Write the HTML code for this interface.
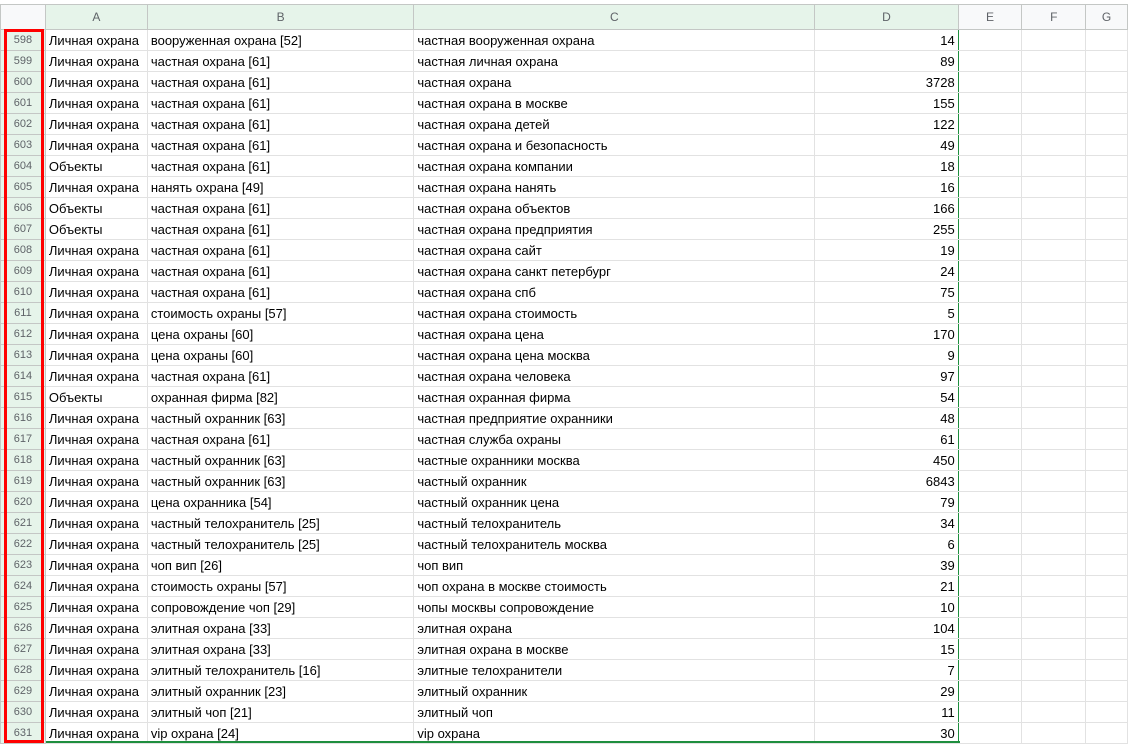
<!DOCTYPE html>
<html><head><meta charset="utf-8"><style>
body{margin:0;width:1128px;height:743px;overflow:hidden;background:#fff;font-family:"Liberation Sans",Arial,sans-serif;position:relative}
table{position:absolute;left:0;top:4px;border-collapse:collapse;table-layout:fixed}
td{border:1px solid #e2e2e2;height:18px;padding:2px 3px 0 3px;font-size:13px;color:#000;white-space:nowrap;overflow:hidden;line-height:18px}
tr.h td{height:24px;padding:0;line-height:20px;background:#f8f9fa;color:#5f6368;text-align:center;font-size:12px;border-color:#c4c7c5}
tr.h td.s{background:#e6f4ea}
td.rn{background:#e6f4ea;color:#5f6368;font-size:11px;text-align:center;border-color:#c4c7c5;padding:0;height:20px;line-height:20px}
td.n{text-align:right}
td.g{border-right:1px solid #1e8e3e}
#red{position:absolute;left:4px;top:29px;width:34px;height:708px;border:3px solid #f00}
#gb{position:absolute;left:46px;top:741px;width:914px;height:2px;background:#1e8e3e}
#topline{position:absolute;left:0;top:0;width:1128px;height:4px;background:#fff}
</style></head><body>
<table>
<colgroup><col style="width:45px"><col style="width:102px"><col style="width:267px"><col style="width:402px"><col style="width:144px"><col style="width:64px"><col style="width:64px"><col style="width:42px"></colgroup>
<tr class="h"><td style="background:#f8f9fa"></td><td class="s">A</td><td class="s">B</td><td class="s">C</td><td class="s">D</td><td>E</td><td>F</td><td>G</td></tr>
<tr><td class="rn">598</td><td>Личная охрана</td><td>вооруженная охрана [52]</td><td>частная вооруженная охрана</td><td class="n g">14</td><td></td><td></td><td></td></tr>
<tr><td class="rn">599</td><td>Личная охрана</td><td>частная охрана [61]</td><td>частная личная охрана</td><td class="n g">89</td><td></td><td></td><td></td></tr>
<tr><td class="rn">600</td><td>Личная охрана</td><td>частная охрана [61]</td><td>частная охрана</td><td class="n g">3728</td><td></td><td></td><td></td></tr>
<tr><td class="rn">601</td><td>Личная охрана</td><td>частная охрана [61]</td><td>частная охрана в москве</td><td class="n g">155</td><td></td><td></td><td></td></tr>
<tr><td class="rn">602</td><td>Личная охрана</td><td>частная охрана [61]</td><td>частная охрана детей</td><td class="n g">122</td><td></td><td></td><td></td></tr>
<tr><td class="rn">603</td><td>Личная охрана</td><td>частная охрана [61]</td><td>частная охрана и безопасность</td><td class="n g">49</td><td></td><td></td><td></td></tr>
<tr><td class="rn">604</td><td>Объекты</td><td>частная охрана [61]</td><td>частная охрана компании</td><td class="n g">18</td><td></td><td></td><td></td></tr>
<tr><td class="rn">605</td><td>Личная охрана</td><td>нанять охрана [49]</td><td>частная охрана нанять</td><td class="n g">16</td><td></td><td></td><td></td></tr>
<tr><td class="rn">606</td><td>Объекты</td><td>частная охрана [61]</td><td>частная охрана объектов</td><td class="n g">166</td><td></td><td></td><td></td></tr>
<tr><td class="rn">607</td><td>Объекты</td><td>частная охрана [61]</td><td>частная охрана предприятия</td><td class="n g">255</td><td></td><td></td><td></td></tr>
<tr><td class="rn">608</td><td>Личная охрана</td><td>частная охрана [61]</td><td>частная охрана сайт</td><td class="n g">19</td><td></td><td></td><td></td></tr>
<tr><td class="rn">609</td><td>Личная охрана</td><td>частная охрана [61]</td><td>частная охрана санкт петербург</td><td class="n g">24</td><td></td><td></td><td></td></tr>
<tr><td class="rn">610</td><td>Личная охрана</td><td>частная охрана [61]</td><td>частная охрана спб</td><td class="n g">75</td><td></td><td></td><td></td></tr>
<tr><td class="rn">611</td><td>Личная охрана</td><td>стоимость охраны [57]</td><td>частная охрана стоимость</td><td class="n g">5</td><td></td><td></td><td></td></tr>
<tr><td class="rn">612</td><td>Личная охрана</td><td>цена охраны [60]</td><td>частная охрана цена</td><td class="n g">170</td><td></td><td></td><td></td></tr>
<tr><td class="rn">613</td><td>Личная охрана</td><td>цена охраны [60]</td><td>частная охрана цена москва</td><td class="n g">9</td><td></td><td></td><td></td></tr>
<tr><td class="rn">614</td><td>Личная охрана</td><td>частная охрана [61]</td><td>частная охрана человека</td><td class="n g">97</td><td></td><td></td><td></td></tr>
<tr><td class="rn">615</td><td>Объекты</td><td>охранная фирма [82]</td><td>частная охранная фирма</td><td class="n g">54</td><td></td><td></td><td></td></tr>
<tr><td class="rn">616</td><td>Личная охрана</td><td>частный охранник [63]</td><td>частная предприятие охранники</td><td class="n g">48</td><td></td><td></td><td></td></tr>
<tr><td class="rn">617</td><td>Личная охрана</td><td>частная охрана [61]</td><td>частная служба охраны</td><td class="n g">61</td><td></td><td></td><td></td></tr>
<tr><td class="rn">618</td><td>Личная охрана</td><td>частный охранник [63]</td><td>частные охранники москва</td><td class="n g">450</td><td></td><td></td><td></td></tr>
<tr><td class="rn">619</td><td>Личная охрана</td><td>частный охранник [63]</td><td>частный охранник</td><td class="n g">6843</td><td></td><td></td><td></td></tr>
<tr><td class="rn">620</td><td>Личная охрана</td><td>цена охранника [54]</td><td>частный охранник цена</td><td class="n g">79</td><td></td><td></td><td></td></tr>
<tr><td class="rn">621</td><td>Личная охрана</td><td>частный телохранитель [25]</td><td>частный телохранитель</td><td class="n g">34</td><td></td><td></td><td></td></tr>
<tr><td class="rn">622</td><td>Личная охрана</td><td>частный телохранитель [25]</td><td>частный телохранитель москва</td><td class="n g">6</td><td></td><td></td><td></td></tr>
<tr><td class="rn">623</td><td>Личная охрана</td><td>чоп вип [26]</td><td>чоп вип</td><td class="n g">39</td><td></td><td></td><td></td></tr>
<tr><td class="rn">624</td><td>Личная охрана</td><td>стоимость охраны [57]</td><td>чоп охрана в москве стоимость</td><td class="n g">21</td><td></td><td></td><td></td></tr>
<tr><td class="rn">625</td><td>Личная охрана</td><td>сопровождение чоп [29]</td><td>чопы москвы сопровождение</td><td class="n g">10</td><td></td><td></td><td></td></tr>
<tr><td class="rn">626</td><td>Личная охрана</td><td>элитная охрана [33]</td><td>элитная охрана</td><td class="n g">104</td><td></td><td></td><td></td></tr>
<tr><td class="rn">627</td><td>Личная охрана</td><td>элитная охрана [33]</td><td>элитная охрана в москве</td><td class="n g">15</td><td></td><td></td><td></td></tr>
<tr><td class="rn">628</td><td>Личная охрана</td><td>элитный телохранитель [16]</td><td>элитные телохранители</td><td class="n g">7</td><td></td><td></td><td></td></tr>
<tr><td class="rn">629</td><td>Личная охрана</td><td>элитный охранник [23]</td><td>элитный охранник</td><td class="n g">29</td><td></td><td></td><td></td></tr>
<tr><td class="rn">630</td><td>Личная охрана</td><td>элитный чоп [21]</td><td>элитный чоп</td><td class="n g">11</td><td></td><td></td><td></td></tr>
<tr><td class="rn">631</td><td>Личная охрана</td><td>vip охрана [24]</td><td>vip охрана</td><td class="n g">30</td><td></td><td></td><td></td></tr>
</table>
<div id="topline"></div>
<div id="gb"></div>
<div id="red"></div>
</body></html>
